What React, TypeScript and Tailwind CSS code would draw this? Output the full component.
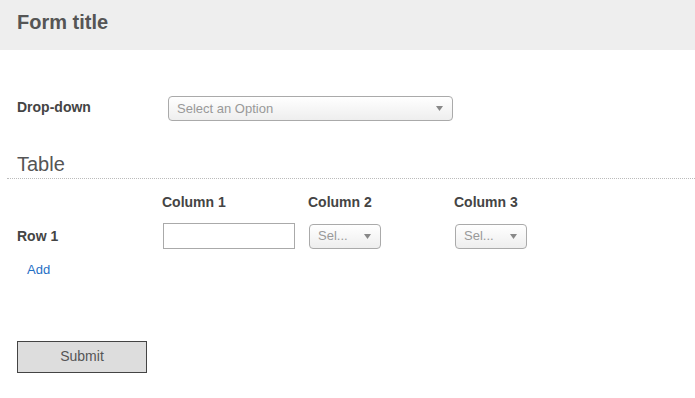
const font = { fontFamily: '"Liberation Sans", Arial, sans-serif' };

function Caret() {
  return (
    <svg width="7" height="5" viewBox="0 0 7 5" className="shrink-0">
      <path d="M0 0h7L3.5 5z" fill="#888" />
    </svg>
  );
}

function SelectBox({ label, className }: { label: string; className: string }) {
  return (
    <div
      className={`flex h-[25px] items-center justify-between rounded-[4px] border border-[#aaa] bg-gradient-to-b from-white to-[#eee] pl-2 pr-[9px] text-[13px] text-[#999] ${className}`}
    >
      <span>{label}</span>
      <Caret />
    </div>
  );
}

export default function App() {
  return (
    <div className="h-[398px] w-[695px] bg-white text-[#444]" style={font}>
      <div className="flex h-[50px] items-center bg-[#eee] px-[17px] pb-[6px]">
        <h1 className="text-[20px] font-bold text-[#555]">Form title</h1>
      </div>

      <div className="flex items-center px-[17px] pt-[46px]">
        <span className="-mt-[3px] w-[151px] text-[14px] font-bold">Drop-down</span>
        <SelectBox label="Select an Option" className="w-[285px]" />
      </div>

      <div className="mt-[30px] pl-[17px] text-[20px] leading-[26px] text-[#555]">Table</div>
      <div className="ml-[7px] mt-[1px] border-t border-dotted border-[#bbb]" />

      <div className="grid grid-cols-[145px_146px_146px_1fr] px-[17px] pt-[13px] text-[14px] font-bold">
        <span />
        <span>Column 1</span>
        <span>Column 2</span>
        <span>Column 3</span>
      </div>

      <div className="mt-[10px] grid grid-cols-[146px_146px_146px_1fr] items-center px-[17px]">
        <span className="text-[14px] font-bold">Row 1</span>
        <input className="h-[26px] w-[132px] border border-[#aaa] bg-white outline-none" />
        <SelectBox label="Sel..." className="w-[72px]" />
        <SelectBox label="Sel..." className="w-[72px]" />
      </div>

      <div className="pl-[27px] pt-[11px] text-[13px] text-[#1f6fc5]">Add</div>

      <div className="px-[17px] pt-[61px]">
        <button className="h-[32px] w-[130px] border border-[#444] bg-[#ddd] text-[14px] text-[#555]">
          Submit
        </button>
      </div>
    </div>
  );
}
